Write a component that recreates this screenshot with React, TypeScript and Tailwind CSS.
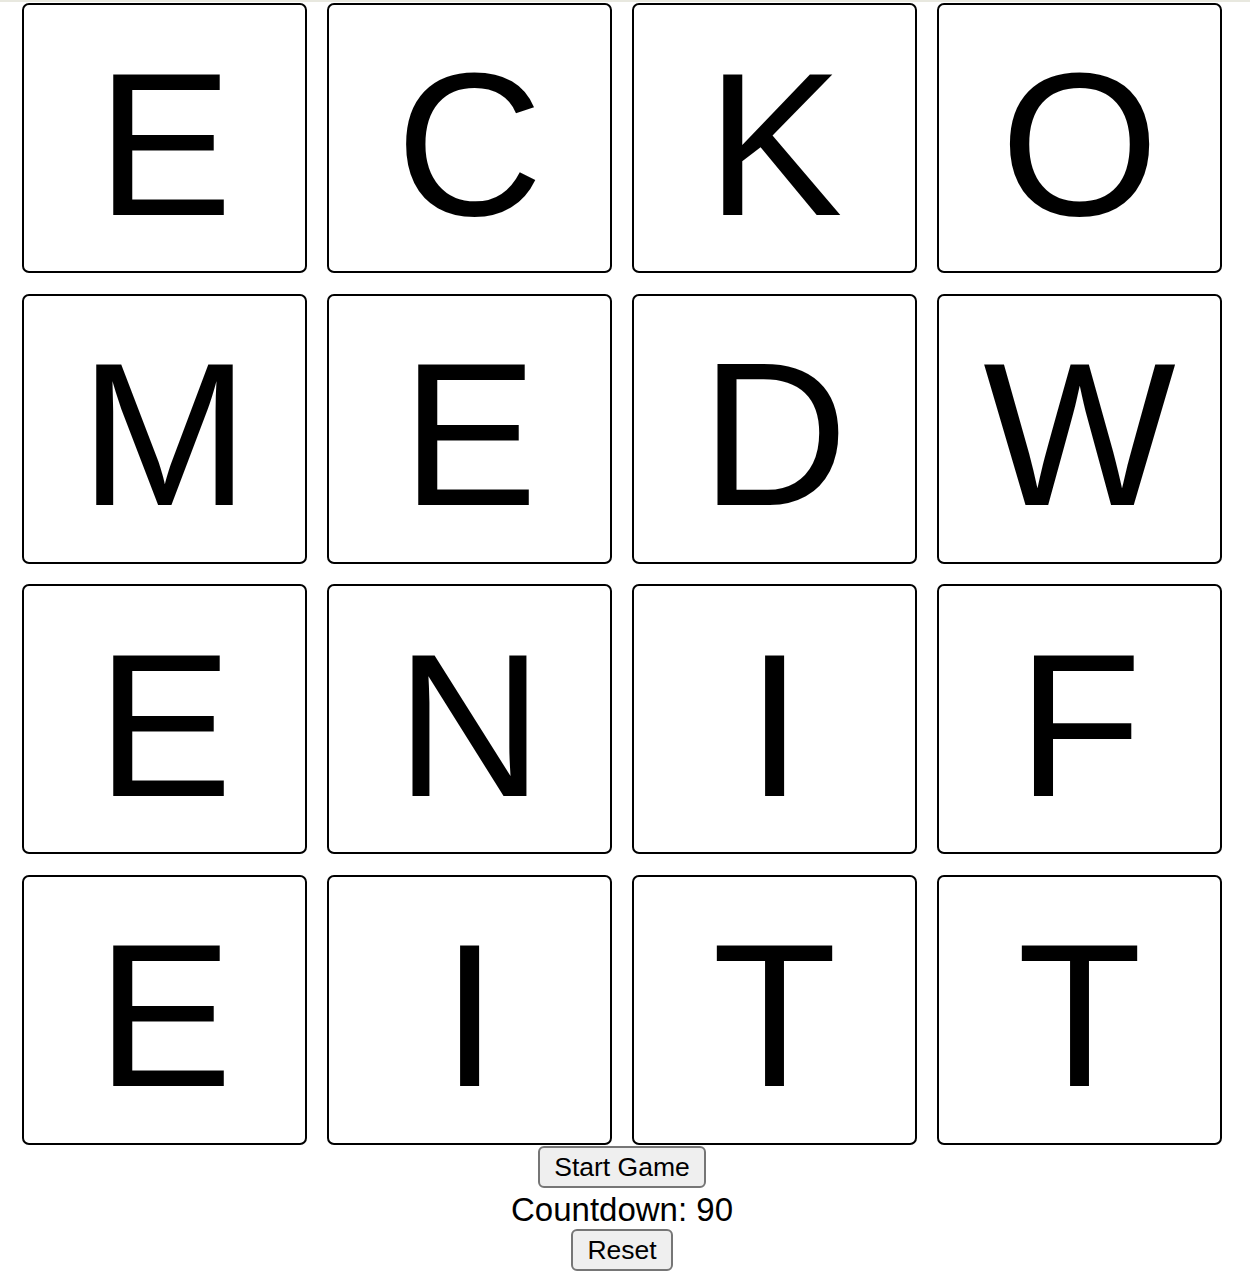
import React from "react";

const letters = ["E", "C", "K", "O", "M", "E", "D", "W", "E", "N", "I", "F", "E", "I", "T", "T"];

const Tile = ({ letter }: { letter: string }) => (
  <div className="flex h-[270px] items-center justify-center rounded-[7px] border-2 border-black bg-white">
    <span className="pt-[11px] text-[204px] leading-none text-black">{letter}</span>
  </div>
);

const App = () => {
  return (
    <div className="min-h-[1288px] w-[1250px] bg-white font-['Liberation_Sans',Arial,sans-serif] text-black">
      <div className="h-[2px] w-full bg-[#e8e8df]" />
      <div className="ml-[22px] w-[1200px]">
        <div className="mt-[1px] grid grid-cols-4 gap-x-[20px] gap-y-[20.67px]">
          {letters.map((l, i) => (
            <Tile key={i} letter={l} />
          ))}
        </div>
        <div className="flex flex-col items-center">
          <button className="mt-[1px] h-[42px] w-[168px] rounded-[6px] border-2 border-[#767676] bg-[#efefef] text-[26.5px] leading-none text-black">
            Start Game
          </button>
          <div className="flex h-[41px] items-center pt-[2px] text-[33px] leading-none">Countdown: 90</div>
          <button className="h-[42px] w-[102px] rounded-[6px] border-2 border-[#767676] bg-[#efefef] text-[26.5px] leading-none text-black">
            Reset
          </button>
        </div>
      </div>
    </div>
  );
};

export default App;
